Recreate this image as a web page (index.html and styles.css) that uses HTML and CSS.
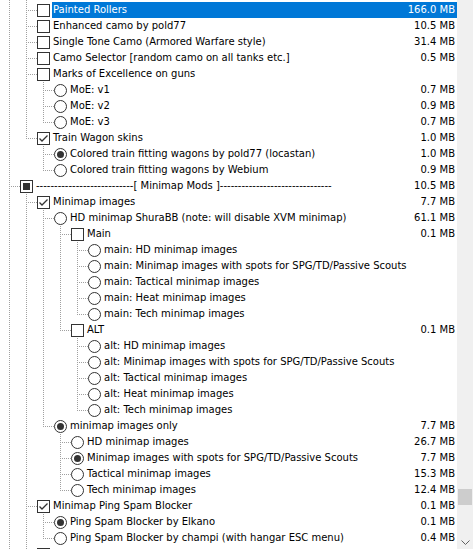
FILE: index.html
```html
<!DOCTYPE html>
<html>
<head>
<meta charset="utf-8">
<title>Components</title>
<link rel="stylesheet" href="styles.css">
</head>
<body>
<div class="win">
  <div class="list">
    <div class="rows">
      <div class="row"><span class="g v"></span><span class="g v"></span></div>

      <div class="row"><span class="g v"></span><span class="g t"></span><span class="bx"><span class="cb"></span></span><span class="lbl sel"><span class="txt">Painted Rollers</span><span class="sz">166.0 MB</span></span></div>
      <div class="row"><span class="g v"></span><span class="g t"></span><span class="bx"><span class="cb"></span></span><span class="lbl"><span class="txt">Enhanced camo by pold77</span><span class="sz">10.5 MB</span></span></div>
      <div class="row"><span class="g v"></span><span class="g t"></span><span class="bx"><span class="cb"></span></span><span class="lbl"><span class="txt">Single Tone Camo (Armored Warfare style)</span><span class="sz">31.4 MB</span></span></div>
      <div class="row"><span class="g v"></span><span class="g t"></span><span class="bx"><span class="cb"></span></span><span class="lbl"><span class="txt">Camo Selector [random camo on all tanks etc.]</span><span class="sz">0.5 MB</span></span></div>
      <div class="row"><span class="g v"></span><span class="g t"></span><span class="bx"><span class="cb"></span></span><span class="lbl"><span class="txt">Marks of Excellence on guns</span><span class="sz"></span></span></div>
      <div class="row"><span class="g v"></span><span class="g v"></span><span class="g t"></span><span class="bx"><svg class="rd" viewBox="0 0 13 13"><circle cx="6.5" cy="6.5" r="6"/></svg></span><span class="lbl"><span class="txt">MoE: v1</span><span class="sz">0.7 MB</span></span></div>
      <div class="row"><span class="g v"></span><span class="g v"></span><span class="g t"></span><span class="bx"><svg class="rd" viewBox="0 0 13 13"><circle cx="6.5" cy="6.5" r="6"/></svg></span><span class="lbl"><span class="txt">MoE: v2</span><span class="sz">0.9 MB</span></span></div>
      <div class="row"><span class="g v"></span><span class="g v"></span><span class="g l"></span><span class="bx"><svg class="rd" viewBox="0 0 13 13"><circle cx="6.5" cy="6.5" r="6"/></svg></span><span class="lbl"><span class="txt">MoE: v3</span><span class="sz">0.7 MB</span></span></div>
      <div class="row"><span class="g v"></span><span class="g l"></span><span class="bx"><span class="cb"><svg class="ck" viewBox="0 0 11 11"><polyline points="1.5,5.5 4,8 9.5,2.5"/></svg></span></span><span class="lbl"><span class="txt">Train Wagon skins</span><span class="sz">1.0 MB</span></span></div>
      <div class="row"><span class="g v"></span><span class="g"></span><span class="g t"></span><span class="bx"><svg class="rd on" viewBox="0 0 13 13"><circle cx="6.5" cy="6.5" r="6"/><circle class="dot" cx="6.5" cy="6.5" r="3.5"/></svg></span><span class="lbl"><span class="txt">Colored train fitting wagons by pold77 (locastan)</span><span class="sz">1.0 MB</span></span></div>
      <div class="row"><span class="g v"></span><span class="g"></span><span class="g l"></span><span class="bx"><svg class="rd" viewBox="0 0 13 13"><circle cx="6.5" cy="6.5" r="6"/></svg></span><span class="lbl"><span class="txt">Colored train fitting wagons by Webium</span><span class="sz">0.9 MB</span></span></div>

      <div class="row"><span class="g t"></span><span class="bx"><span class="cb"><span class="part"></span></span></span><span class="lbl"><span class="txt">---------------------------[ Minimap Mods ]-------------------------------</span><span class="sz">10.5 MB</span></span></div>
      <div class="row"><span class="g v"></span><span class="g t"></span><span class="bx"><span class="cb"><svg class="ck" viewBox="0 0 11 11"><polyline points="1.5,5.5 4,8 9.5,2.5"/></svg></span></span><span class="lbl"><span class="txt">Minimap images</span><span class="sz">7.7 MB</span></span></div>
      <div class="row"><span class="g v"></span><span class="g v"></span><span class="g t"></span><span class="bx"><svg class="rd" viewBox="0 0 13 13"><circle cx="6.5" cy="6.5" r="6"/></svg></span><span class="lbl"><span class="txt">HD minimap ShuraBB (note: will disable XVM minimap)</span><span class="sz">61.1 MB</span></span></div>
      <div class="row"><span class="g v"></span><span class="g v"></span><span class="g v"></span><span class="g t"></span><span class="bx"><span class="cb"></span></span><span class="lbl"><span class="txt">Main</span><span class="sz">0.1 MB</span></span></div>
      <div class="row"><span class="g v"></span><span class="g v"></span><span class="g v"></span><span class="g v"></span><span class="g t"></span><span class="bx"><svg class="rd" viewBox="0 0 13 13"><circle cx="6.5" cy="6.5" r="6"/></svg></span><span class="lbl"><span class="txt">main: HD minimap images</span><span class="sz"></span></span></div>
      <div class="row"><span class="g v"></span><span class="g v"></span><span class="g v"></span><span class="g v"></span><span class="g t"></span><span class="bx"><svg class="rd" viewBox="0 0 13 13"><circle cx="6.5" cy="6.5" r="6"/></svg></span><span class="lbl"><span class="txt">main: Minimap images with spots for SPG/TD/Passive Scouts</span><span class="sz"></span></span></div>
      <div class="row"><span class="g v"></span><span class="g v"></span><span class="g v"></span><span class="g v"></span><span class="g t"></span><span class="bx"><svg class="rd" viewBox="0 0 13 13"><circle cx="6.5" cy="6.5" r="6"/></svg></span><span class="lbl"><span class="txt">main: Tactical minimap images</span><span class="sz"></span></span></div>
      <div class="row"><span class="g v"></span><span class="g v"></span><span class="g v"></span><span class="g v"></span><span class="g t"></span><span class="bx"><svg class="rd" viewBox="0 0 13 13"><circle cx="6.5" cy="6.5" r="6"/></svg></span><span class="lbl"><span class="txt">main: Heat minimap images</span><span class="sz"></span></span></div>
      <div class="row"><span class="g v"></span><span class="g v"></span><span class="g v"></span><span class="g v"></span><span class="g l"></span><span class="bx"><svg class="rd" viewBox="0 0 13 13"><circle cx="6.5" cy="6.5" r="6"/></svg></span><span class="lbl"><span class="txt">main: Tech minimap images</span><span class="sz"></span></span></div>
      <div class="row"><span class="g v"></span><span class="g v"></span><span class="g v"></span><span class="g l"></span><span class="bx"><span class="cb"></span></span><span class="lbl"><span class="txt">ALT</span><span class="sz">0.1 MB</span></span></div>
      <div class="row"><span class="g v"></span><span class="g v"></span><span class="g v"></span><span class="g"></span><span class="g t"></span><span class="bx"><svg class="rd" viewBox="0 0 13 13"><circle cx="6.5" cy="6.5" r="6"/></svg></span><span class="lbl"><span class="txt">alt: HD minimap images</span><span class="sz"></span></span></div>
      <div class="row"><span class="g v"></span><span class="g v"></span><span class="g v"></span><span class="g"></span><span class="g t"></span><span class="bx"><svg class="rd" viewBox="0 0 13 13"><circle cx="6.5" cy="6.5" r="6"/></svg></span><span class="lbl"><span class="txt">alt: Minimap images with spots for SPG/TD/Passive Scouts</span><span class="sz"></span></span></div>
      <div class="row"><span class="g v"></span><span class="g v"></span><span class="g v"></span><span class="g"></span><span class="g t"></span><span class="bx"><svg class="rd" viewBox="0 0 13 13"><circle cx="6.5" cy="6.5" r="6"/></svg></span><span class="lbl"><span class="txt">alt: Tactical minimap images</span><span class="sz"></span></span></div>
      <div class="row"><span class="g v"></span><span class="g v"></span><span class="g v"></span><span class="g"></span><span class="g t"></span><span class="bx"><svg class="rd" viewBox="0 0 13 13"><circle cx="6.5" cy="6.5" r="6"/></svg></span><span class="lbl"><span class="txt">alt: Heat minimap images</span><span class="sz"></span></span></div>
      <div class="row"><span class="g v"></span><span class="g v"></span><span class="g v"></span><span class="g"></span><span class="g l"></span><span class="bx"><svg class="rd" viewBox="0 0 13 13"><circle cx="6.5" cy="6.5" r="6"/></svg></span><span class="lbl"><span class="txt">alt: Tech minimap images</span><span class="sz"></span></span></div>
      <div class="row"><span class="g v"></span><span class="g v"></span><span class="g l"></span><span class="bx"><svg class="rd on" viewBox="0 0 13 13"><circle cx="6.5" cy="6.5" r="6"/><circle class="dot" cx="6.5" cy="6.5" r="3.5"/></svg></span><span class="lbl"><span class="txt">minimap images only</span><span class="sz">7.7 MB</span></span></div>
      <div class="row"><span class="g v"></span><span class="g v"></span><span class="g"></span><span class="g t"></span><span class="bx"><svg class="rd" viewBox="0 0 13 13"><circle cx="6.5" cy="6.5" r="6"/></svg></span><span class="lbl"><span class="txt">HD minimap images</span><span class="sz">26.7 MB</span></span></div>
      <div class="row"><span class="g v"></span><span class="g v"></span><span class="g"></span><span class="g t"></span><span class="bx"><svg class="rd on" viewBox="0 0 13 13"><circle cx="6.5" cy="6.5" r="6"/><circle class="dot" cx="6.5" cy="6.5" r="3.5"/></svg></span><span class="lbl"><span class="txt">Minimap images with spots for SPG/TD/Passive Scouts</span><span class="sz">7.7 MB</span></span></div>
      <div class="row"><span class="g v"></span><span class="g v"></span><span class="g"></span><span class="g t"></span><span class="bx"><svg class="rd" viewBox="0 0 13 13"><circle cx="6.5" cy="6.5" r="6"/></svg></span><span class="lbl"><span class="txt">Tactical minimap images</span><span class="sz">15.3 MB</span></span></div>
      <div class="row"><span class="g v"></span><span class="g v"></span><span class="g"></span><span class="g l"></span><span class="bx"><svg class="rd" viewBox="0 0 13 13"><circle cx="6.5" cy="6.5" r="6"/></svg></span><span class="lbl"><span class="txt">Tech minimap images</span><span class="sz">12.4 MB</span></span></div>
      <div class="row"><span class="g v"></span><span class="g t"></span><span class="bx"><span class="cb"><svg class="ck" viewBox="0 0 11 11"><polyline points="1.5,5.5 4,8 9.5,2.5"/></svg></span></span><span class="lbl"><span class="txt">Minimap Ping Spam Blocker</span><span class="sz">0.1 MB</span></span></div>
      <div class="row"><span class="g v"></span><span class="g v"></span><span class="g t"></span><span class="bx"><svg class="rd on" viewBox="0 0 13 13"><circle cx="6.5" cy="6.5" r="6"/><circle class="dot" cx="6.5" cy="6.5" r="3.5"/></svg></span><span class="lbl"><span class="txt">Ping Spam Blocker by Elkano</span><span class="sz">0.1 MB</span></span></div>
      <div class="row"><span class="g v"></span><span class="g v"></span><span class="g l"></span><span class="bx"><svg class="rd" viewBox="0 0 13 13"><circle cx="6.5" cy="6.5" r="6"/></svg></span><span class="lbl"><span class="txt">Ping Spam Blocker by champi (with hangar ESC menu)</span><span class="sz">0.4 MB</span></span></div>
      <div class="row"><span class="g v"></span><span class="g t"></span><span class="bx"><span class="cb"></span></span><span class="lbl"><span class="txt"></span><span class="sz"></span></span></div>
    </div>
  </div>
  <div class="sb">
    <div class="track"><div class="thumb" style="margin-top:489px"></div></div>
    <div class="arrow"><svg width="9" height="5" viewBox="0 0 9 5"><polyline points="0.5,0.5 4.5,4.5 8.5,0.5"/></svg></div>
  </div>
</div>
</body>
</html>
```

FILE: styles.css
```css
:root {
  --vd: repeating-linear-gradient(to bottom, #a0a0a0 0 1px, transparent 1px 2px);
  --hd: repeating-linear-gradient(to right, #a0a0a0 0 1px, transparent 1px 2px);
}
html, body {
  margin: 0;
  padding: 0;
  background: #fff;
}
body {
  width: 473px;
  height: 549px;
  overflow: hidden;
  font-family: "DejaVu Sans", "Liberation Sans", sans-serif;
  font-size: 10px;
  color: #000;
}
.win {
  display: flex;
  height: 549px;
}
.list {
  width: 457px;
  height: 549px;
  overflow: hidden;
  background: #fff;
}
.rows {
  margin-top: -14px;
}
.row {
  display: flex;
  height: 16px;
  line-height: 16px;
}
.g {
  flex: 0 0 17px;
  height: 16px;
  background-repeat: no-repeat;
}
.g.v {
  background-image: var(--vd);
  background-position: 9px 0;
  background-size: 1px 16px;
}
.g.t {
  background-image: var(--vd), var(--hd);
  background-position: 9px 0, 11px 8px;
  background-size: 1px 16px, 6px 1px;
}
.g.l {
  background-image: var(--vd), var(--hd);
  background-position: 9px 0, 11px 8px;
  background-size: 1px 9px, 6px 1px;
}
.bx {
  flex: 0 0 18px;
  height: 16px;
  background-image: var(--hd);
  background-repeat: no-repeat;
  background-position: 0 8px;
  background-size: 3px 1px;
}
.cb {
  display: block;
  box-sizing: border-box;
  width: 13px;
  height: 13px;
  margin: 2px 0 0 3px;
  border: 1px solid #333;
  background: #fff;
}
.ck {
  display: block;
  width: 11px;
  height: 11px;
  fill: none;
  stroke: #333;
  stroke-width: 1.3;
}
.part {
  display: block;
  width: 7px;
  height: 7px;
  margin: 2px;
  background: #333;
}
.rd {
  display: block;
  width: 13px;
  height: 13px;
  margin: 2px 0 0 3px;
  fill: #fff;
  stroke: #333;
  stroke-width: 1;
}
.rd .dot {
  fill: #333;
  stroke: none;
}
.lbl {
  flex: 1;
  min-width: 0;
  display: flex;
  justify-content: space-between;
  white-space: nowrap;
}
.lbl.sel {
  background: #0078d7;
  color: #fff;
}
.txt {
  padding-left: 1px;
}
.sz {
  padding-right: 2px;
}
.sb {
  width: 16px;
  height: 549px;
  background: #f0f0f0;
  display: flex;
  flex-direction: column;
}
.track {
  flex: 1;
}
.thumb {
  height: 16px;
  margin-left: 1px;
  margin-right: 1px;
  background: #cdcdcd;
}
.arrow {
  height: 17px;
  display: flex;
  justify-content: center;
  align-items: flex-start;
}
.arrow svg {
  margin-top: 8px;
  fill: none;
  stroke: #606060;
  stroke-width: 1;
}
```
